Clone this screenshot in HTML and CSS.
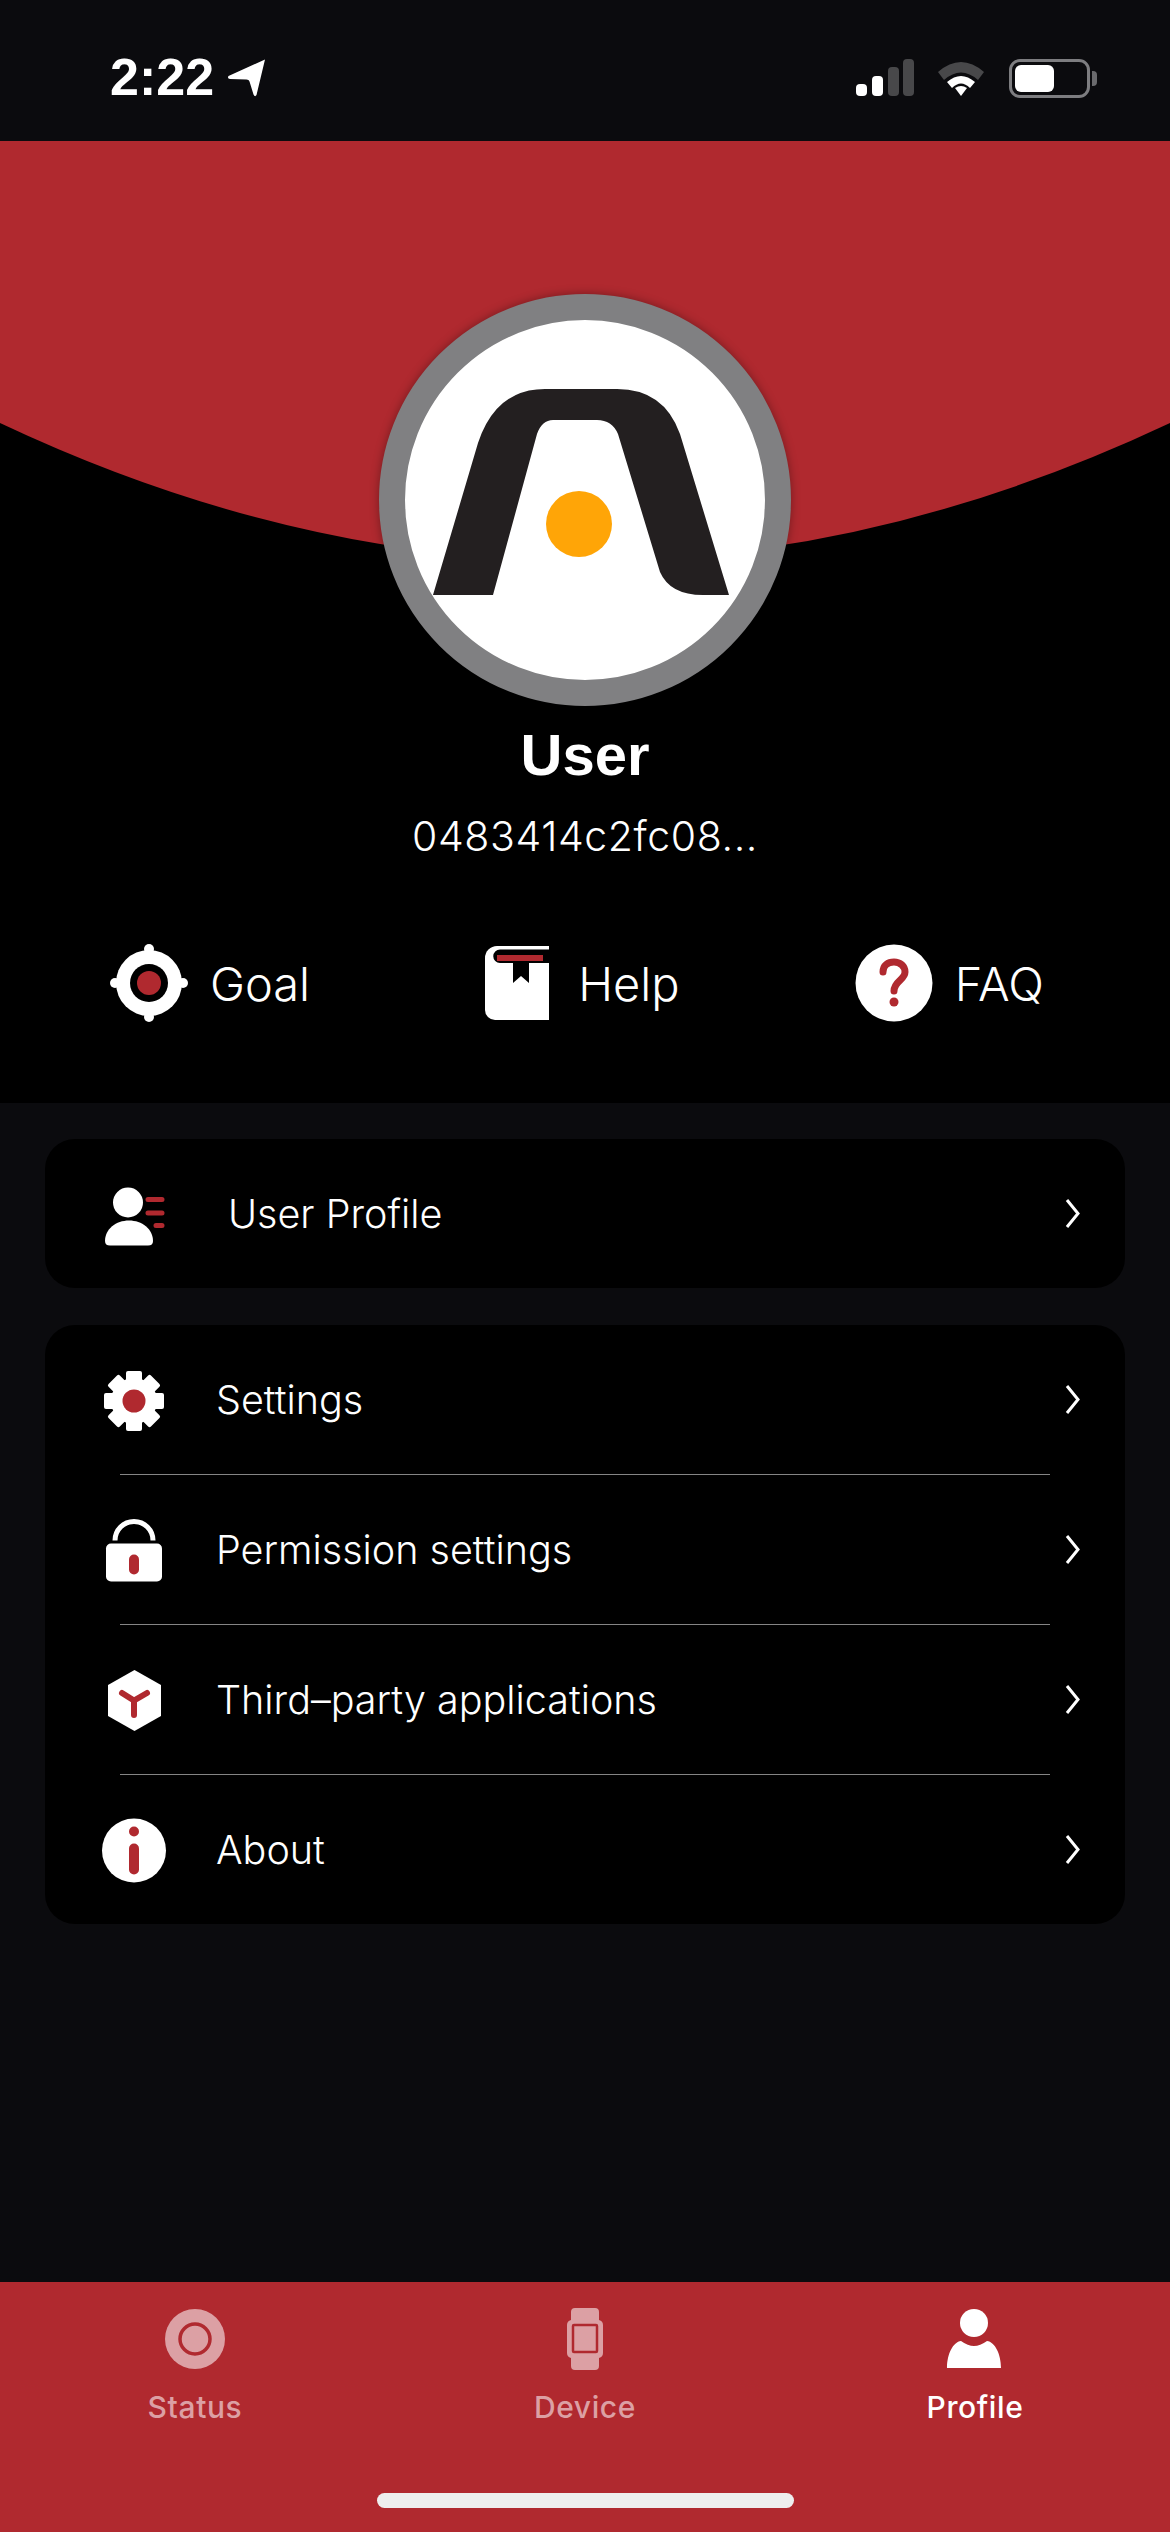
FILE: index.html
```html
<!DOCTYPE html>
<html lang="en">
<head>
    <meta charset="UTF-8">
    <title>Profile</title>
    <link rel="stylesheet" href="styles.css">
</head>
<body>
<div class="page">
    <div class="status-bar">
        <div class="status-left">
            <span class="time">2:22</span>
            <svg class="arrow" width="40" height="38" viewBox="0 0 40 38"><path d="M38 0.5L29.5 36Q28 38.5 26.5 35.5L22.5 22.5Q22 20.5 19.5 20.5L3 20Q0 19.5 1.500 17Z" fill="#fff"/></svg>
        </div>
        <div class="status-right">
            <svg width="58" height="37" viewBox="0 0 58 37">
                <rect x="0" y="25" width="11" height="12" rx="4" fill="#fff"/>
                <rect x="16" y="17" width="11" height="20" rx="4" fill="#fff"/>
                <rect x="32" y="8" width="11" height="29" rx="4" fill="#48484a"/>
                <rect x="47" y="0" width="11" height="37" rx="4" fill="#48484a"/>
            </svg>
            <svg width="50" height="37" viewBox="0 0 50 37">
                <path d="M2 13Q25 -7 48 13L42 21Q25 6 8 21Z" fill="#48484a"/>
                <path d="M11 23Q25 11 39 23L34 29Q25 20 16 29Z" fill="#fff"/>
                <path d="M19 29Q25 25 31 29L25 37Z" fill="#fff"/>
            </svg>
            <div class="battery">
                <div class="battery-fill"></div>
            </div>
        </div>
    </div>

    <div class="hero">
        <svg class="hero-arc" width="1170" height="420" viewBox="0 0 1170 420"><path d="M0 0H1170V282Q585 558 0 282Z" fill="#b0292f"/></svg>
        <svg class="avatar" width="412" height="412" viewBox="379 294 412 412">
            <circle cx="585" cy="500" r="193" fill="#fff" stroke="#808082" stroke-width="26"/>
            <path d="M433 595L478 443Q496 389 545 389H617Q664 389 680 434L729 595H703Q670 595 660 572L618 434Q612 420 597 420H553Q542 420 537 434L493 595Z" fill="#231f20"/>
            <circle cx="579" cy="524" r="33" fill="#ffa507"/>
        </svg>
        <div class="name">User</div>
        <div class="user-id">0483414c2fc08...</div>
        <div class="quick-row">
            <div class="quick-item">
                <svg width="78" height="78" viewBox="0 0 78 78">
                    <circle cx="39" cy="5" r="5" fill="#fff"/><circle cx="39" cy="73" r="5" fill="#fff"/>
                    <circle cx="5" cy="39" r="5" fill="#fff"/><circle cx="73" cy="39" r="5" fill="#fff"/>
                    <circle cx="39" cy="39" r="33" fill="#fff"/>
                    <circle cx="39" cy="39" r="19" fill="#000"/>
                    <circle cx="39" cy="39" r="12" fill="#b0292f"/>
                </svg>
                <span>Goal</span>
            </div>
            <div class="quick-item quick-help">
                <svg width="64" height="74" viewBox="0 0 64 74">
                    <path d="M12 0H64V74H10A10 10 0 0 1 0 64V12A12 12 0 0 1 12 0Z" fill="#fff"/>
                    <path d="M15 3.500H64V17H15A6.750 6.750 0 0 1 15 3.500Z" fill="#000"/>
                    <rect x="12" y="9" width="46" height="6" fill="#b0292f"/>
                    <path d="M28 17H44V37L36 30L28 37Z" fill="#000"/>
                </svg>
                <span>Help</span>
            </div>
            <div class="quick-item">
                <svg width="78" height="78" viewBox="0 0 78 78">
                    <circle cx="39" cy="39" r="38.500" fill="#fff"/>
                    <path d="M28 28C28 21 33 18 39 18S50 22 50 28C50 36 39 37 39 47" fill="none" stroke="#b0292f" stroke-width="7" stroke-linecap="round"/>
                    <circle cx="39" cy="58" r="4.500" fill="#b0292f"/>
                </svg>
                <span>FAQ</span>
            </div>
        </div>
    </div>

    <div class="main">
        <div class="card">
            <div class="row row-wide">
                <svg class="row-icon" width="88" height="80" viewBox="0 0 88 80">
                    <circle cx="38" cy="28.500" r="15" fill="#fff"/>
                    <path d="M15 67C15 55 26 46.500 39 46.500S63 55 63 67Q63 71.500 58 71.500H20Q15 71.500 15 67Z" fill="#fff"/>
                    <path d="M58 25.500H72M58 39H72M66 51.500H72" stroke="#b0292f" stroke-width="5" stroke-linecap="round"/>
                </svg>
                <span class="row-label">User Profile</span>
                <svg class="chevron" width="15" height="31" viewBox="0 0 15 31"><path d="M2 2L13 15.500L2 29" fill="none" stroke="#fff" stroke-width="3"/></svg>
            </div>
        </div>
        <div class="card">
            <div class="row">
                <svg class="row-icon" width="88" height="80" viewBox="0 0 88 80">
                    <circle cx="44" cy="41" r="23" fill="#fff"/>
                    <g fill="#fff">
                        <rect x="36" y="11" width="16" height="60" rx="2"/>
                        <rect x="36" y="11" width="16" height="60" rx="2" transform="rotate(45 44 41)"/>
                        <rect x="36" y="11" width="16" height="60" rx="2" transform="rotate(90 44 41)"/>
                        <rect x="36" y="11" width="16" height="60" rx="2" transform="rotate(135 44 41)"/>
                    </g>
                    <circle cx="44" cy="41" r="11.500" fill="#b0292f"/>
                </svg>
                <span class="row-label">Settings</span>
                <svg class="chevron" width="15" height="31" viewBox="0 0 15 31"><path d="M2 2L13 15.500L2 29" fill="none" stroke="#fff" stroke-width="3"/></svg>
            </div>
            <div class="divider"></div>
            <div class="row">
                <svg class="row-icon" width="88" height="80" viewBox="0 0 88 80">
                    <path d="M25 30.500A19 19 0 0 1 63 30.500" fill="none" stroke="#fff" stroke-width="5"/>
                    <rect x="16" y="33.500" width="56" height="38" rx="5" fill="#fff"/>
                    <rect x="39" y="44.500" width="10" height="20" rx="5" fill="#b0292f"/>
                </svg>
                <span class="row-label">Permission settings</span>
                <svg class="chevron" width="15" height="31" viewBox="0 0 15 31"><path d="M2 2L13 15.500L2 29" fill="none" stroke="#fff" stroke-width="3"/></svg>
            </div>
            <div class="divider"></div>
            <div class="row">
                <svg class="row-icon" width="88" height="80" viewBox="0 0 88 80">
                    <polygon points="44.500,10 71,25 71,56 44.500,71 18,56 18,25" fill="#fff"/>
                    <path d="M32 33L44 40.500L57 33M44 40.500V55" fill="none" stroke="#b0292f" stroke-width="6" stroke-linecap="round"/>
                </svg>
                <span class="row-label">Third–party applications</span>
                <svg class="chevron" width="15" height="31" viewBox="0 0 15 31"><path d="M2 2L13 15.500L2 29" fill="none" stroke="#fff" stroke-width="3"/></svg>
            </div>
            <div class="divider"></div>
            <div class="row">
                <svg class="row-icon" width="88" height="80" viewBox="0 0 88 80">
                    <circle cx="44" cy="40.500" r="32" fill="#fff"/>
                    <circle cx="44" cy="21.500" r="5" fill="#b0292f"/>
                    <rect x="39" y="33.500" width="10" height="31" rx="5" fill="#b0292f"/>
                </svg>
                <span class="row-label">About</span>
                <svg class="chevron" width="15" height="31" viewBox="0 0 15 31"><path d="M2 2L13 15.500L2 29" fill="none" stroke="#fff" stroke-width="3"/></svg>
            </div>
        </div>
    </div>

    <div class="tab-bar">
        <div class="tabs">
            <div class="tab">
                <svg width="62" height="62" viewBox="0 0 62 62">
                    <circle cx="31" cy="31" r="30" fill="#dca0a4"/>
                    <circle cx="31" cy="31" r="15" fill="none" stroke="#b0292f" stroke-width="3.500"/>
                </svg>
                <span>Status</span>
            </div>
            <div class="tab">
                <svg width="62" height="62" viewBox="0 0 62 62">
                    <path d="M17 4Q17 0 21 0H41Q45 0 45 4V12Q49 13 49 17V45Q49 49 45 50V58Q45 62 41 62H21Q17 62 17 58V50Q13 49 13 45V17Q13 13 17 12Z" fill="#dca0a4"/>
                    <rect x="19" y="17" width="24" height="27" rx="1" fill="none" stroke="#b0292f" stroke-width="2.500"/>
                </svg>
                <span>Device</span>
            </div>
            <div class="tab tab-active">
                <svg width="62" height="62" viewBox="0 0 62 62">
                    <circle cx="30" cy="15" r="14" fill="#fff"/>
                    <path d="M3 60C3 46 9 34 17 33Q24 38 30 38T43 33C51 34 57 46 57 60Z" fill="#fff"/>
                </svg>
                <span>Profile</span>
            </div>
        </div>
        <div class="home-bar"></div>
    </div>
</div>
</body>
</html>
```

FILE: styles.css
```css
* {
    padding: 0;
    margin: 0;
    box-sizing: border-box;
}
body {
    background-color: #0b0b0e;
    font-family: Inter, "Liberation Sans", sans-serif;
    color: #fff;
}
svg {
    display: block;
    flex-shrink: 0;
}
.page {
    width: 1170px;
    height: 2532px;
    display: flex;
    flex-direction: column;
    overflow: hidden;
}

/* status bar */
.status-bar {
    height: 141px;
    padding: 59px 80px 0 110px;
    display: flex;
    justify-content: space-between;
    align-items: flex-start;
}
.status-left {
    display: flex;
    align-items: flex-start;
    gap: 13px;
}
.time {
    font-family: "Liberation Sans", sans-serif;
    font-size: 52px;
    line-height: 37px;
    font-weight: 700;
}
.status-right {
    display: flex;
    align-items: flex-start;
    gap: 22px;
}
.battery {
    width: 81px;
    height: 39px;
    margin-left: 1px;
    padding: 5px;
    border: 3px solid #7d7d80;
    border-radius: 11px;
    position: relative;
}
.battery::after {
    content: "";
    position: absolute;
    top: 9px;
    right: -10px;
    width: 5px;
    height: 15px;
    border-radius: 0 4px 4px 0;
    background-color: #6a6a6d;
}
.battery-fill {
    width: 39px;
    height: 27px;
    margin-top: -2px;
    margin-left: -2px;
    border-radius: 6px;
    background-color: #fff;
}

/* top part with the red arc */
.hero {
    height: 962px;
    background-color: #000;
    position: relative;
    display: flex;
    flex-direction: column;
    align-items: center;
    padding-top: 153px;
}
.hero-arc {
    position: absolute;
    top: 0;
    left: 0;
}
.avatar {
    position: relative;
    filter: drop-shadow(0 0 5px rgba(0, 0, 0, 0.35));
}
.name {
    margin-top: 16px;
    font-family: "Liberation Sans", sans-serif;
    font-size: 58px;
    line-height: 66px;
    font-weight: 700;
}
.user-id {
    margin-top: 23px;
    font-size: 41px;
    line-height: 50px;
    font-weight: 350;
    letter-spacing: 0.6px;
}
.quick-row {
    width: 100%;
    margin-top: 83px;
    padding: 0 126px 0 110px;
    display: flex;
    justify-content: space-between;
    align-items: center;
}
.quick-item {
    display: flex;
    align-items: center;
    gap: 22px;
    font-size: 47px;
    font-weight: 300;
}
.quick-help {
    gap: 29px;
}

/* menu cards */
.main {
    flex: 1;
    padding: 36px 45px 0;
    display: flex;
    flex-direction: column;
    gap: 37px;
}
.card {
    background-color: #000;
    border-radius: 30px;
}
.row {
    height: 149px;
    padding: 0 45px;
    display: flex;
    align-items: center;
}
.row-label {
    flex: 1;
    margin-left: 38px;
    font-size: 39.5px;
    font-weight: 300;
}
.row-wide .row-label {
    margin-left: 50px;
}
.divider {
    height: 1px;
    margin: 0 75px;
    background-color: #858585;
}

/* tab bar */
.tab-bar {
    height: 250px;
    background-color: #b0292f;
    position: relative;
}
.tabs {
    display: grid;
    grid-template-columns: repeat(3, 390px);
    padding-top: 26px;
}
.tab {
    display: flex;
    flex-direction: column;
    align-items: center;
    gap: 18px;
    font-size: 30px;
    line-height: 38px;
    font-weight: 450;
    letter-spacing: 0.6px;
    color: #dca0a4;
}
.tab-active {
    color: #fff;
}
.home-bar {
    position: absolute;
    left: 377px;
    bottom: 24px;
    width: 417px;
    height: 15px;
    border-radius: 8px;
    background-color: #eeeeee;
}
```
